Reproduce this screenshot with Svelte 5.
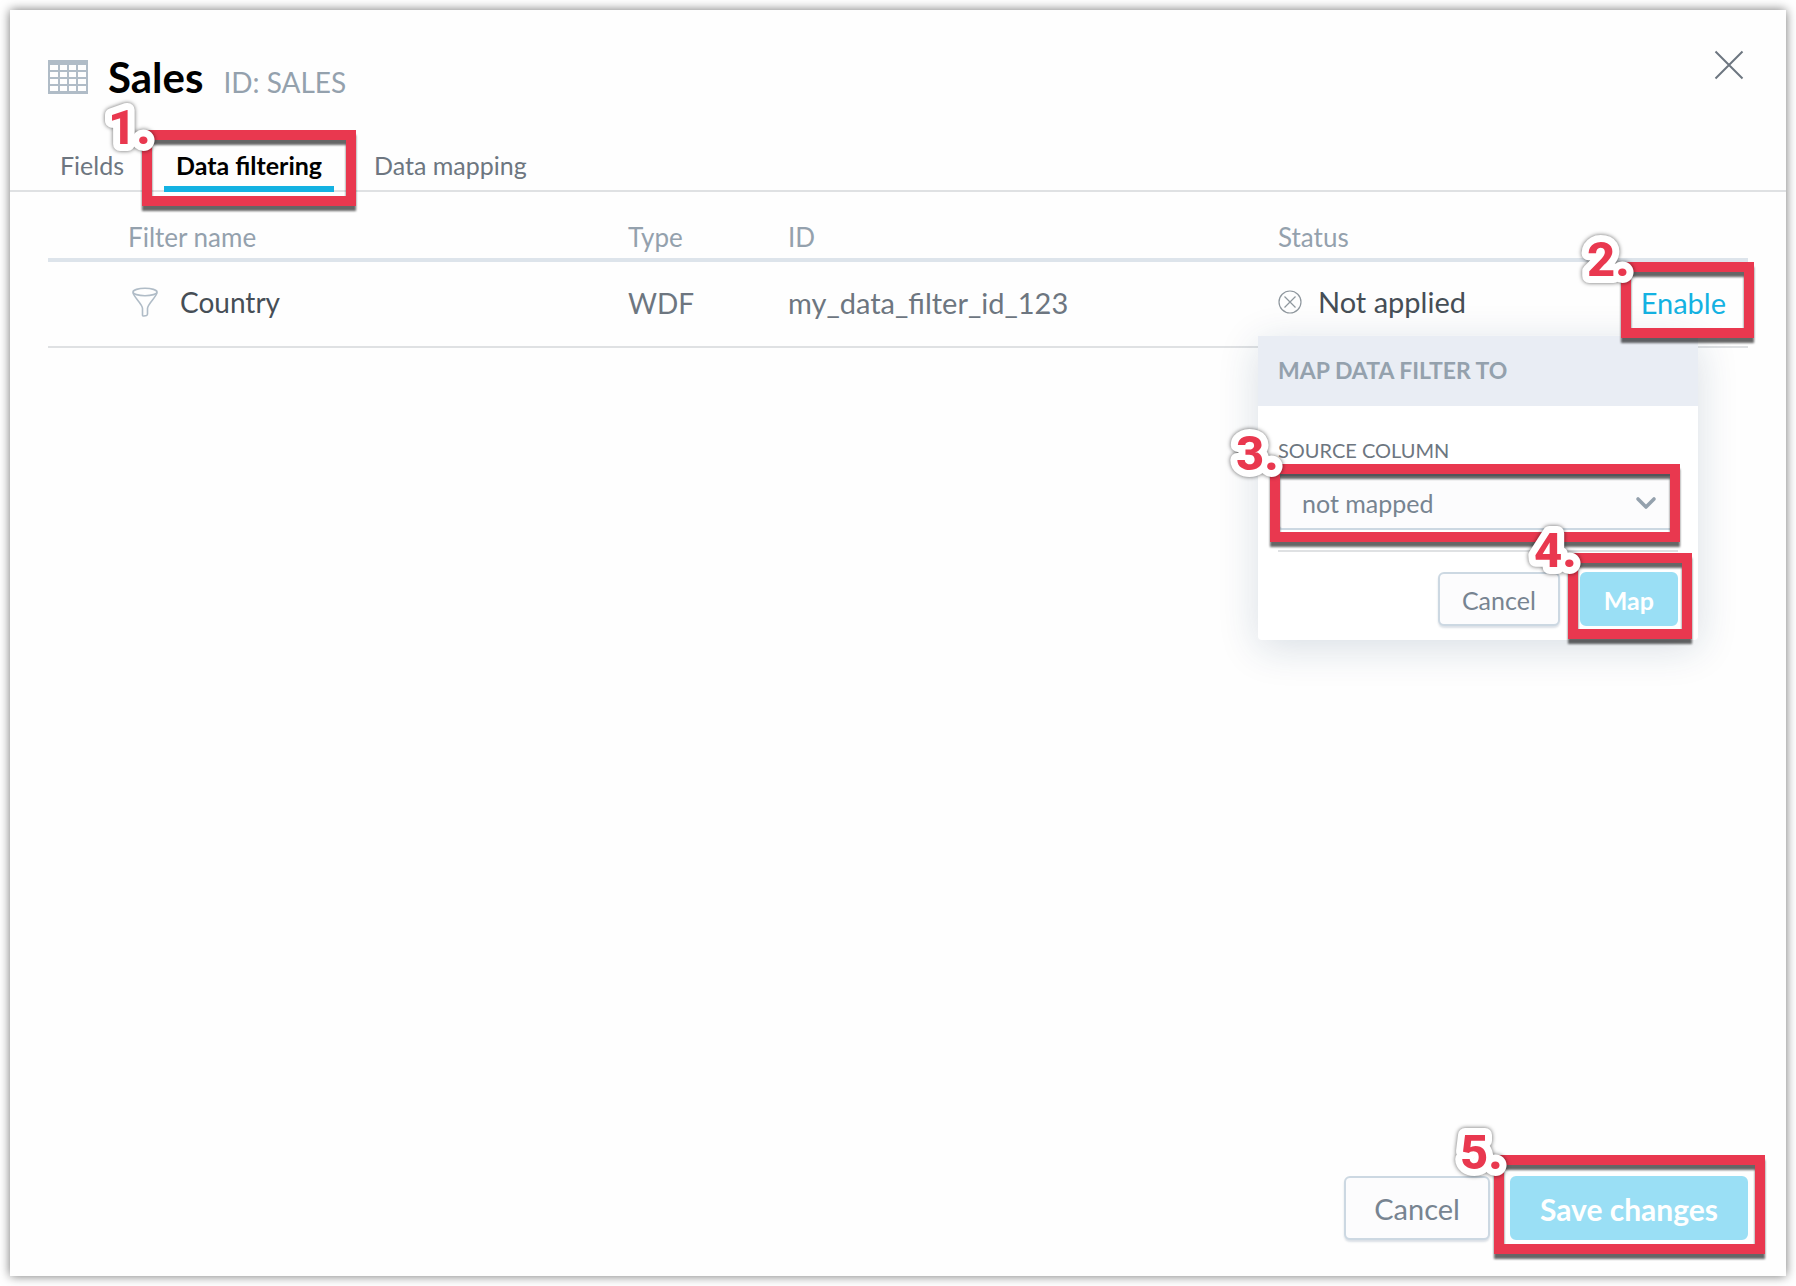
<script lang="ts">
  type Filter = { name: string; type: string; id: string; status: string };

  const tabs = ["Fields", "Data filtering", "Data mapping"];
  const filters: Filter[] = [
    { name: "Country", type: "WDF", id: "my_data_filter_id_123", status: "Not applied" },
  ];

  let activeTab = $state("Data filtering");
  let sourceColumn = $state("not mapped");
</script>

{#snippet callout(step: number)}
  <span class="callout callout--{step}">
    <svg class="callout-number" width="80" height="72" viewBox="0 0 80 72">
      <text x="20" y="50">{step}.</text>
    </svg>
  </span>
{/snippet}

<main class="page">
  <section class="dialog">
    <header class="header">
      <svg class="grid-icon" width="40" height="34" viewBox="0 0 40 34">
        <path fill="#b0bcc7" fill-rule="evenodd" d="M0 0H40V34H0ZM2 5V10H10V5ZM12 5V10H19V5ZM21 5V10H28V5ZM30 5V10H38V5ZM2 12V17H10V12ZM12 12V17H19V12ZM21 12V17H28V12ZM30 12V17H38V12ZM2 19V24H10V19ZM12 19V24H19V19ZM21 19V24H28V19ZM30 19V24H38V19ZM2 26V31H10V26ZM12 26V31H19V26ZM21 26V31H28V26ZM30 26V31H38V26Z" />
      </svg>
      <h1>Sales</h1>
      <span class="dataset-id">ID: SALES</span>
      <button class="close" aria-label="Close">
        <svg width="30" height="30" viewBox="0 0 30 30">
          <path d="M1.5 1.5L28.5 28.5M28.5 1.5L1.5 28.5" fill="none" stroke="#6d7680" stroke-width="2" />
        </svg>
      </button>
    </header>

    <nav class="tabs">
      {#each tabs as tab}
        <button class="tab" class:tab--active={tab === activeTab} onclick={() => (activeTab = tab)}>
          {tab}
          {#if tab === "Data filtering"}{@render callout(1)}{/if}
        </button>
      {/each}
    </nav>

    <div class="content">
      <table>
        <colgroup>
          <col />
          <col class="col-type" />
          <col class="col-id" />
          <col class="col-status" />
          <col class="col-action" />
        </colgroup>
        <thead>
          <tr>
            <th class="cell-name">Filter name</th>
            <th>Type</th>
            <th>ID</th>
            <th>Status</th>
            <th aria-label="Action"></th>
          </tr>
        </thead>
        <tbody>
          {#each filters as filter}
            <tr>
              <td class="cell-name">
                <span class="with-icon with-icon--name">
                  <svg width="30" height="30" viewBox="-1 0 30 30" fill="none" stroke="#b0bcc7" stroke-width="1.6">
                    <ellipse cx="16" cy="5" rx="12" ry="3.7" />
                    <path d="M4 5.5C4.500 10 13.500 17 13.500 21.500V28Q13.500 29.200 15 29L17.500 28.500Q18.500 28 18.500 27V21.500C18.500 17 27.500 10 28 5.500" />
                  </svg>
                  {filter.name}
                </span>
              </td>
              <td class="cell-type">{filter.type}</td>
              <td>{filter.id}</td>
              <td class="cell-status">
                <span class="with-icon">
                  <svg width="24" height="24" viewBox="0 0 24 24" fill="none" stroke="#8f979e" stroke-width="1.2">
                    <circle cx="12" cy="12" r="11" />
                    <path d="M6.500 6.500L17.500 17.500M17.500 6.500L6.500 17.500" />
                  </svg>
                  {filter.status}
                </span>

                <div class="popover">
                  <h2>MAP DATA FILTER TO</h2>
                  <div class="popover-body">
                    <label for="source-column">SOURCE COLUMN</label>
                    <div class="select">
                      <select id="source-column" bind:value={sourceColumn}>
                        <option>not mapped</option>
                      </select>
                      <svg class="chevron" width="22" height="16" viewBox="0 0 22 16">
                        <path d="M3 4L11 12L19 4" fill="none" stroke="#94a1ad" stroke-width="3.6" stroke-linecap="round" stroke-linejoin="round" />
                      </svg>
                      {@render callout(3)}
                    </div>
                    <div class="popover-actions">
                      <button class="button button--small">Cancel</button>
                      <button class="button button--small button--primary">Map{@render callout(4)}</button>
                    </div>
                  </div>
                </div>
              </td>
              <td class="cell-action">
                <button class="enable">Enable{@render callout(2)}</button>
              </td>
            </tr>
          {/each}
        </tbody>
      </table>
    </div>

    <footer class="footer">
      <button class="button">Cancel</button>
      <button class="button button--save button--primary">Save changes{@render callout(5)}</button>
    </footer>
  </section>
</main>

<style>
  :global(body) { margin: 0; background: #fff; }

  .page, .page * { box-sizing: border-box; }

  .page {
    display: flex;
    min-height: 100vh;
    padding: 10px;
    font-family: Lato, "Open Sans", sans-serif;
    color: #464e56;
  }

  button {
    margin: 0;
    padding: 0;
    border: 0;
    background: none;
    font: inherit;
    color: inherit;
    white-space: nowrap;
    cursor: pointer;
  }

  svg { display: block; flex: none; }

  .dialog {
    display: flex;
    flex: 1;
    flex-direction: column;
    min-width: 0;
    background: #fefefe;
    box-shadow: 0 0 10px rgba(0, 0, 0, 0.55);
  }

  .header {
    display: flex;
    align-items: center;
    height: 134px;
    padding: 0 42px 0 38px;
  }

  h1 {
    margin: 0 20px;
    font-size: 42px;
    line-height: 48px;
    font-weight: 700;
    color: #000;
  }

  .dataset-id {
    padding-top: 10px;
    font-size: 28px;
    line-height: 40px;
    color: #94a1ad;
  }

  .close {
    margin-left: auto;
    padding-bottom: 24px;
  }

  .tabs {
    display: flex;
    gap: 28px;
    padding-left: 38px;
    border-bottom: 2px solid #dfe1e3;
  }

  .tab {
    position: relative;
    height: 48px;
    margin-bottom: -2px;
    padding: 0 12px 6px;
    font-size: 25px;
    line-height: 42px;
    color: #6d7680;
  }

  .tab--active {
    padding-bottom: 0;
    border-bottom: 6px solid #14b2e2;
    font-weight: 700;
    color: #000;
  }

  .content { padding: 0 38px; }

  table {
    width: 100%;
    table-layout: fixed;
    border-collapse: separate;
    border-spacing: 0;
  }

  .col-type { width: 160px; }
  .col-id { width: 490px; }
  .col-status { width: 342px; }
  .col-action { width: 128px; }

  th {
    height: 70px;
    padding: 24px 0 0;
    border-bottom: 4px solid #dde4eb;
    font-size: 26px;
    line-height: 32px;
    font-weight: 400;
    text-align: left;
    color: #94a1ad;
  }

  td {
    height: 86px;
    padding: 0 0 2px;
    border-bottom: 2px solid #dfe1e3;
    font-size: 29px;
    line-height: 36px;
    color: #6d7680;
  }

  .cell-name { padding-left: 80px; }
  td.cell-name, .cell-type { font-size: 28px; }
  .cell-status { position: relative; }
  .cell-action { padding-right: 22px; text-align: right; }

  .with-icon {
    display: flex;
    align-items: center;
    gap: 16px;
    padding-bottom: 2px;
    color: #464e56;
  }

  .with-icon--name { gap: 22px; }

  .enable { position: relative; color: #14b2e2; }

  .popover {
    position: absolute;
    z-index: 1;
    top: 74px;
    left: -20px;
    width: 440px;
    border-radius: 4px;
    background: #fff;
    box-shadow: 0 8px 40px rgba(20, 56, 93, 0.16);
  }

  h2 {
    margin: 0;
    padding: 0 20px 2px;
    background: #e9edf4;
    font-size: 23px;
    line-height: 68px;
    font-weight: 700;
    color: #94a1ad;
  }

  .popover-body { padding: 30px 20px 14px; }

  label {
    display: block;
    font-size: 20px;
    line-height: 28px;
    color: #6d7680;
  }

  .select { position: relative; margin-top: 10px; }

  select {
    display: block;
    width: 100%;
    height: 56px;
    padding: 2px 22px 0;
    appearance: none;
    border: 2px solid #ccd8e2;
    border-radius: 4px;
    background: #fcfcfd;
    font: 25px/32px Lato, "Open Sans", sans-serif;
    color: #778491;
  }

  .chevron {
    position: absolute;
    top: 21px;
    right: 21px;
  }

  .popover-actions {
    display: flex;
    justify-content: flex-end;
    gap: 20px;
    margin-top: 20px;
    padding-top: 20px;
    border-top: 2px solid #dfe1e3;
  }

  .button {
    position: relative;
    height: 64px;
    padding: 2px 28px 0;
    border: 2px solid #ccd8e2;
    border-radius: 6px;
    background: #fcfcfd;
    box-shadow: 0 2px 2px rgba(20, 56, 93, 0.15);
    font-size: 29px;
    line-height: 36px;
    color: #778491;
  }

  .button--small {
    height: 54px;
    padding: 2px 22px 0;
    font-size: 25px;
    line-height: 32px;
  }

  .button--save { font-size: 30px; }

  .button--primary {
    border-color: #9adff5;
    background: #9adff5;
    box-shadow: none;
    font-weight: 700;
    color: #fff;
  }

  .footer {
    display: flex;
    justify-content: flex-end;
    gap: 20px;
    margin-top: auto;
    padding: 36px 38px;
  }

  /* red frames with step numbers, laid over the control they point at */
  .callout {
    position: absolute;
    z-index: 2;
    pointer-events: none;
  }

  .callout::before {
    content: "";
    position: absolute;
    inset: 0;
    border: 10px solid #e9384f;
    filter: drop-shadow(0 5px 1px rgba(0, 0, 0, 0.6));
  }

  .callout--1 { inset: -14px -22px -20px; }
  .callout--2 { inset: -23px -28px -17px -20px; }
  .callout--3 { inset: -10px -2px -12px -8px; }
  .callout--4 { inset: -21px -16px -15px -14px; }
  .callout--5 { inset: -23px -19px -16px -18px; }

  .callout-number {
    position: absolute;
    top: -36px;
    left: -54px;
    filter: drop-shadow(0 0 2px rgba(0, 0, 0, 0.6));
  }

  .callout--3 .callout-number { top: -44px; }

  .callout-number text {
    font: 800 49px Roboto, "Liberation Sans", sans-serif;
    fill: #e9384f;
    stroke: #fff;
    stroke-width: 14px;
    stroke-linejoin: round;
    paint-order: stroke;
  }
</style>
